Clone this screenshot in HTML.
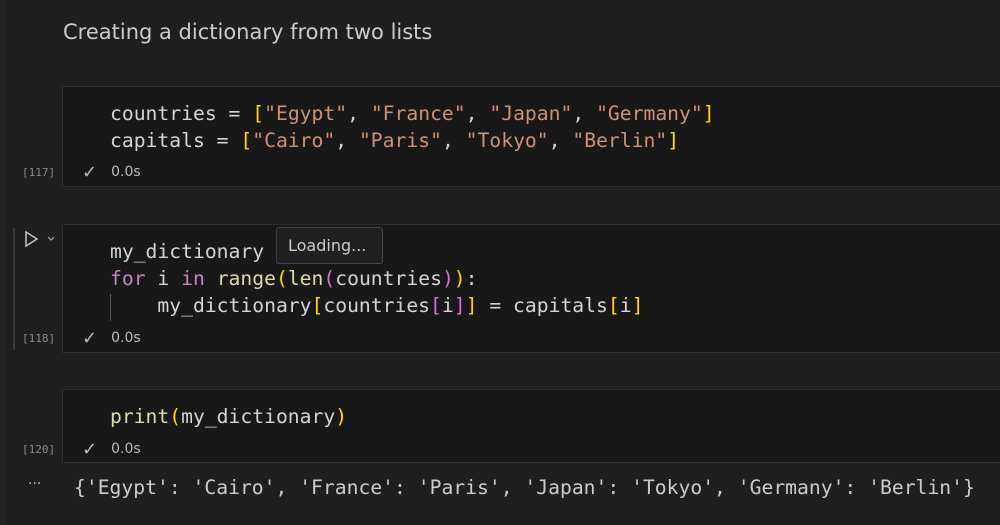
<!DOCTYPE html>
<html><head><style>
body{margin:0;width:1000px;height:525px;background:#1f1f1f;overflow:hidden;position:relative;font-family:"DejaVu Sans","Liberation Sans",sans-serif}
.strip{position:absolute;left:0;top:0;width:7px;height:525px;background:#232323}
.title{position:absolute;left:63px;top:20px;font-size:21px;color:#cccccc}
.cell{position:absolute;left:62px;width:950px;background:#181818;border:1px solid #2e2e2e;box-sizing:border-box}
.code{position:absolute;left:110px;font-family:"DejaVu Sans Mono","Liberation Mono",monospace;font-size:19.7px;line-height:27px;color:#d4d4d4;white-space:pre}
.s{color:#ce9178}.b{color:#ffd700}.p{color:#da70d6}.k{color:#c586c0}.f{color:#dcdcaa}.v{color:#9cdcfe}
.num{position:absolute;left:22px;font-family:"DejaVu Sans Mono",monospace;font-size:11px;color:#8a8a8a}
.st{position:absolute;left:82px;font-size:14px;color:#bbbbbb}
.st b{font-weight:normal;font-size:18px;vertical-align:-2px}
.st span{margin-left:14px}
.tip{position:absolute;left:276px;top:227px;width:107px;height:37px;background:#202020;border:1px solid #454545;border-radius:3px;box-sizing:border-box;color:#cccccc;font-size:16px;line-height:35px;padding-left:11px}
</style></head><body>
<div class="strip"></div>
<div class="title">Creating a dictionary from two lists</div>

<div class="cell" style="top:86px;height:101px"></div>
<div class="code" style="top:100px">countries = <span class="b">[</span><span class="s">"Egypt"</span>, <span class="s">"France"</span>, <span class="s">"Japan"</span>, <span class="s">"Germany"</span><span class="b">]</span>
capitals = <span class="b">[</span><span class="s">"Cairo"</span>, <span class="s">"Paris"</span>, <span class="s">"Tokyo"</span>, <span class="s">"Berlin"</span><span class="b">]</span></div>
<div class="num" style="top:166px">[117]</div>
<div class="st" style="top:162px"><b>✓</b><span>0.0s</span></div>

<div style="position:absolute;left:13px;top:228px;width:2px;height:122px;background:#3a3a3a"></div>
<svg style="position:absolute;left:24px;top:230px" width="36" height="18"><path d="M2 2 L13 9 L2 16 Z" fill="none" stroke="#c5c5c5" stroke-width="1.5"/><path d="M24 7 L27 10 L30 7" fill="none" stroke="#aaa" stroke-width="1.2"/></svg>
<div class="cell" style="top:224px;height:129px"></div>
<div class="code" style="top:238px">my_dictionary
<span class="k">for</span> i <span class="k">in</span> <span class="f">range</span><span class="b">(</span><span class="f">len</span><span class="p">(</span>countries<span class="p">)</span><span class="b">)</span>:
    my_dictionary<span class="b">[</span>countries<span class="p">[</span>i<span class="p">]</span><span class="b">]</span> = capitals<span class="b">[</span>i<span class="b">]</span></div>
<div style="position:absolute;left:110px;top:294px;width:1px;height:27px;background:#555"></div>
<div class="tip">Loading...</div>
<div class="num" style="top:332px">[118]</div>
<div class="st" style="top:328px"><b>✓</b><span>0.0s</span></div>

<div class="cell" style="top:389px;height:74px"></div>
<div class="code" style="top:403px"><span class="f">print</span><span class="b">(</span>my_dictionary<span class="b">)</span></div>
<div class="num" style="top:443px">[120]</div>
<div class="st" style="top:439px"><b>✓</b><span>0.0s</span></div>

<div style="position:absolute;left:28px;top:476px;color:#bbb;font-size:14px">···</div>
<div class="code" style="left:74px;top:474px;color:#cccccc">{'Egypt': 'Cairo', 'France': 'Paris', 'Japan': 'Tokyo', 'Germany': 'Berlin'}</div>
</body></html>
